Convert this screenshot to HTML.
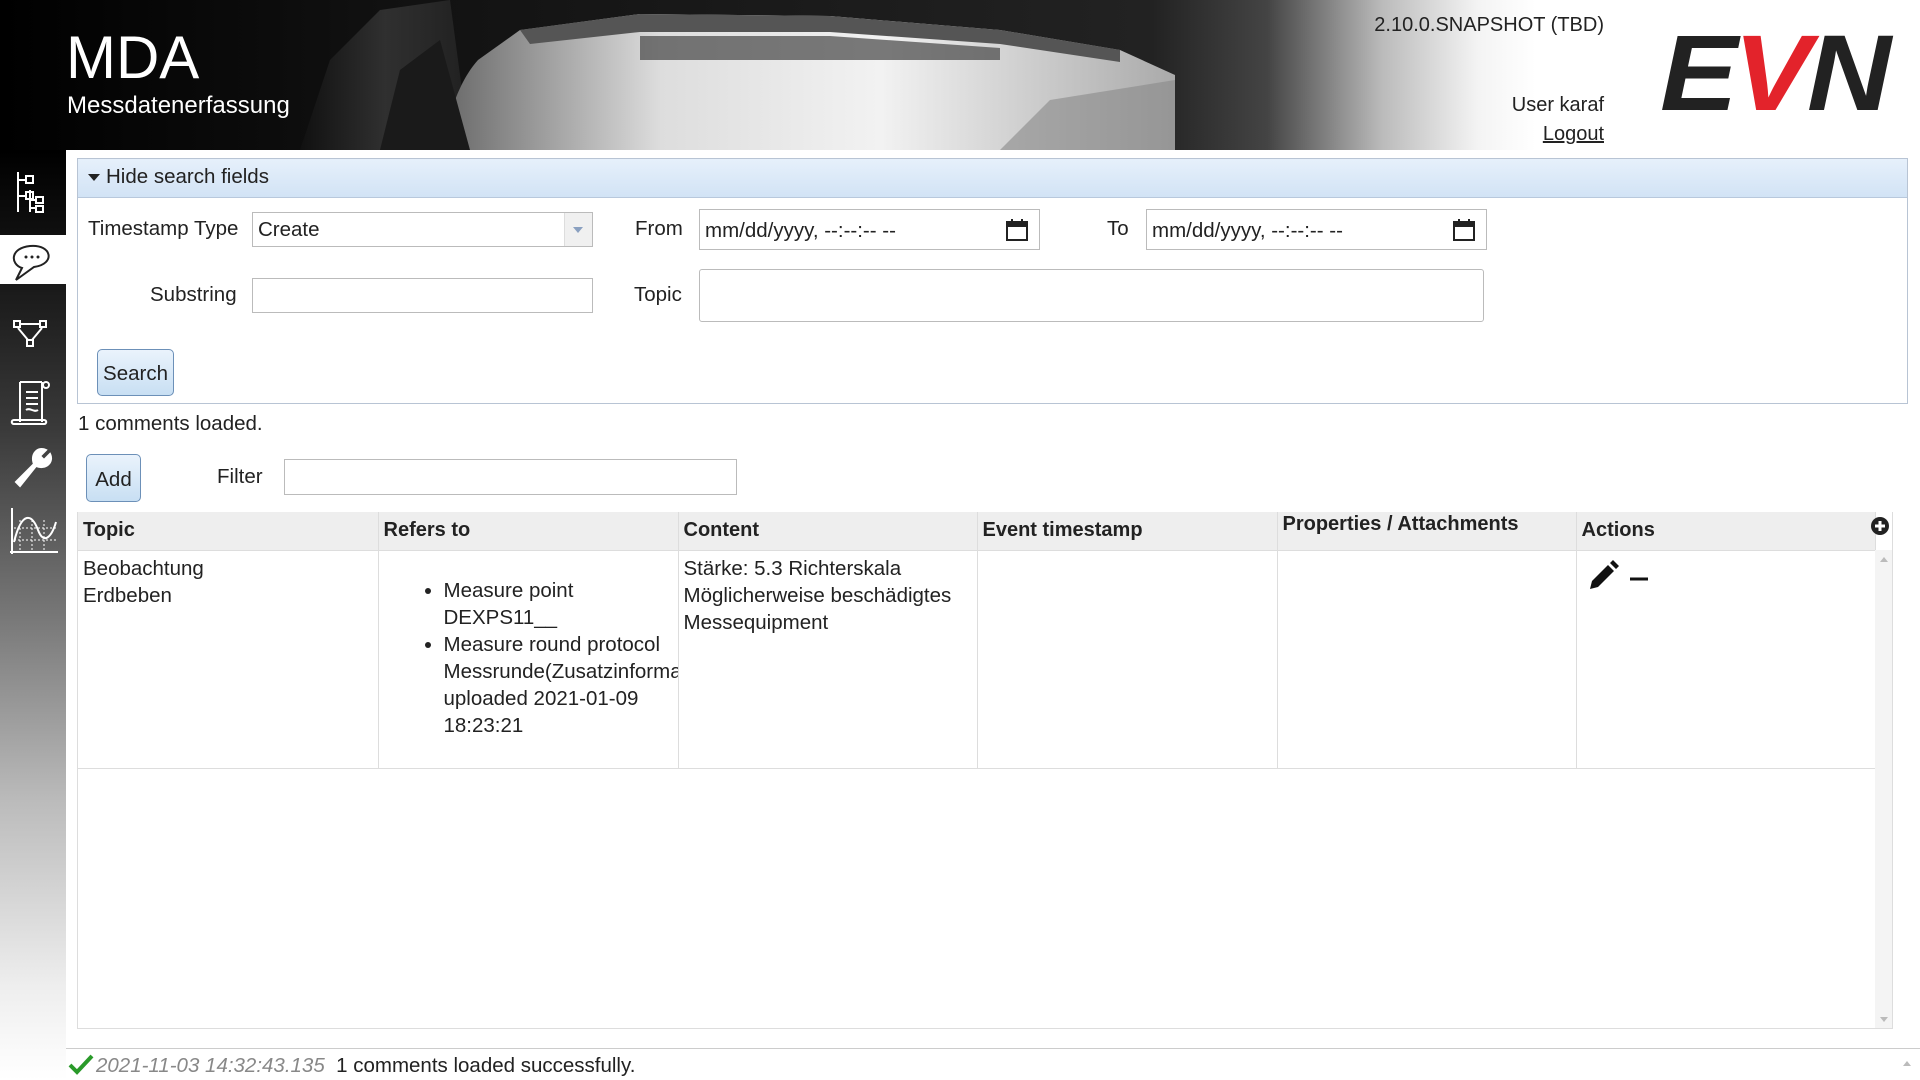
<!DOCTYPE html>
<html><head><meta charset="utf-8"><style>
*{box-sizing:border-box;margin:0;padding:0}
body{width:1920px;height:1080px;overflow:hidden;background:#fff;font-family:"Liberation Sans",sans-serif;font-size:20.5px;color:#222;position:relative}
.abs{position:absolute}
#hdr{left:0;top:0;width:1920px;height:150px;background:linear-gradient(90deg,#000 0,#111 20%,#1a1a1a 40%,#222 60%,#444 66%,#bbb 72%,#f4f4f4 77%,#fff 80%)}
#side{left:0;top:150px;width:66px;height:930px;background:linear-gradient(180deg,#000 0,#1a1a1a 15%,#3a3a3a 30%,#777 50%,#bbb 70%,#eee 90%,#fff 100%)}
input,.box{position:absolute;border:1px solid #bbb;background:#fff;font:inherit;padding-left:5px;color:#222}
.btn{position:absolute;border:1px solid #6c90b8;border-radius:5px;background:linear-gradient(#eaf3fc,#c8dff3);text-align:center}
table{border-collapse:collapse;table-layout:fixed}
th{background:#eee;text-align:left;font-weight:bold;font-size:20px;height:38px;padding:0 5px;border-right:1px solid #ddd;border-bottom:1px solid #ddd}
td{vertical-align:top;border-right:1px solid #ddd;border-bottom:1px solid #ddd;padding:4px 5px;line-height:27px;height:218px}
</style></head><body>
<div id="hdr" class="abs"></div>
<svg class="abs" style="left:0;top:0" width="1250" height="150">
<defs><linearGradient id="dg" x1="0" x2="1"><stop offset="0" stop-color="#666"/><stop offset=".3" stop-color="#ddd"/><stop offset=".6" stop-color="#f2f2f2"/><stop offset="1" stop-color="#aaa"/></linearGradient>
<linearGradient id="tg" x1="0" x2="1"><stop offset="0" stop-color="#111"/><stop offset=".5" stop-color="#333"/><stop offset="1" stop-color="#222"/></linearGradient></defs>
<path d="M300 150 L330 60 L380 10 L450 0 L470 150Z" fill="url(#tg)" opacity=".9"/>
<path d="M440 150 C450 110 460 80 478 60 L520 30 L640 14 L830 16 L1000 30 L1120 50 L1175 75 L1175 150Z" fill="url(#dg)"/>
<path d="M520 30 L640 14 L830 16 L1000 30 L1120 50 L1120 62 L1000 44 L830 32 L640 32 L530 44Z" fill="#555"/>
<path d="M640 36 L830 36 L1000 48 L1000 60 L640 60Z" fill="#444" opacity=".7"/>
<path d="M1050 100 L1175 80 L1175 150 L1000 150Z" fill="#888" opacity=".6"/>
<path d="M380 150 L400 70 L440 40 L470 150Z" fill="#1a1a1a"/>
</svg>
<div class="abs" style="left:66px;top:28px;color:#fff;font-size:60px;font-weight:300;line-height:60px">MDA</div>
<div class="abs" style="left:67px;top:92px;color:#fff;font-size:24px">Messdatenerfassung</div>
<div class="abs" style="right:316px;top:14px;font-size:20px">2.10.0.SNAPSHOT (TBD)</div>
<div class="abs" style="right:316px;top:94px;font-size:20px">User karaf</div>
<div class="abs" style="right:316px;top:123px;font-size:20px;text-decoration:underline">Logout</div>
<div class="abs" style="left:1660px;top:18px;font-weight:bold;font-style:italic;font-size:108px;letter-spacing:-4px;line-height:110px;transform:scaleX(1.08);transform-origin:left"><span style="color:#222">E</span><span style="color:#e3232b">V</span><span style="color:#222">N</span></div>

<div id="side" class="abs"></div>
<div class="abs" style="left:0;top:235px;width:66px;height:49px;background:#fff"></div>
<svg class="abs" style="left:0;top:150px" width="66" height="420" fill="none" stroke="#fff" stroke-width="2">
<path d="M18 22V62M18 30H26M18 46H26M30 40V62M30 50h6M30 58h6"/><rect x="26" y="26" width="7" height="7"/><rect x="26" y="42" width="7" height="7"/><rect x="36" y="47" width="7" height="6"/><rect x="36" y="56" width="7" height="6"/>
<path d="M16 130 L22 118 C10 114 10 98 30 96 C52 94 56 114 34 117 Z" stroke="#222"/><circle cx="26" cy="107" r="1.5" fill="#222" stroke="none"/><circle cx="32" cy="107" r="1.5" fill="#222" stroke="none"/><circle cx="38" cy="107" r="1.5" fill="#222" stroke="none"/>
<rect x="14" y="171" width="6" height="6"/><rect x="40" y="171" width="6" height="6"/><rect x="27" y="190" width="6" height="6"/><path d="M20 174H40M18 178L28 190M42 178L32 190"/>
<path d="M20 232V272M20 232h22M42 232v40M14 270h30c3 0 3 4 0 4H14c-3 0-3-4 0-4M26 242h12M26 248h12M26 254h12M26 260c4-3 8 3 12 0"/><circle cx="46" cy="235" r="3"/>
<path d="M16 332L34 314C30 304 38 296 46 300L40 306 44 310 50 304C54 312 46 320 36 316L20 336Z" fill="#fff"/>
<path d="M10 402H58M12 404V358M14 392C22 360 32 364 38 380S52 386 56 372" /><path d="M20 370V400M32 370V400M44 370V400M14 378H56M14 390H56" stroke-dasharray="2 2" stroke-width="1"/>
</svg>

<div class="abs" style="left:77px;top:158px;width:1831px;height:246px;border:1px solid #b8c4d4"></div>
<div class="abs" style="left:78px;top:159px;width:1829px;height:39px;background:linear-gradient(#e6f0fb,#d2e3f5);border-bottom:1px solid #b8c8dc;padding:6px 0 0 28px">Hide search fields</div>
<div class="abs" style="left:88px;top:174px;width:0;height:0;border-left:6px solid transparent;border-right:6px solid transparent;border-top:7px solid #222"></div>
<div class="abs" style="left:88px;top:217px">Timestamp Type</div>
<div class="box" style="left:252px;top:212px;width:341px;height:35px;padding-top:5px">Create</div>
<div class="abs" style="left:564px;top:213px;width:28px;height:33px;background:#f0f0f0;border-left:1px solid #ddd"></div>
<div class="abs" style="left:573px;top:227px;border-left:5px solid transparent;border-right:5px solid transparent;border-top:6px solid #8aa0c0"></div>
<div class="abs" style="left:635px;top:217px">From</div>
<div class="box" style="left:699px;top:209px;width:341px;height:41px;padding-top:9px">mm/dd/yyyy, --:--:-- --</div>
<div class="abs" style="left:1107px;top:217px">To</div>
<div class="box" style="left:1146px;top:209px;width:341px;height:41px;padding-top:9px">mm/dd/yyyy, --:--:-- --</div>
<svg class="abs" style="left:1005px;top:218px" width="24" height="24"><rect x="2" y="4" width="20" height="18" fill="none" stroke="#222" stroke-width="2"/><rect x="2" y="4" width="20" height="5" fill="#222"/><path d="M7 1v5M17 1v5" stroke="#222" stroke-width="2"/></svg>
<svg class="abs" style="left:1452px;top:218px" width="24" height="24"><rect x="2" y="4" width="20" height="18" fill="none" stroke="#222" stroke-width="2"/><rect x="2" y="4" width="20" height="5" fill="#222"/><path d="M7 1v5M17 1v5" stroke="#222" stroke-width="2"/></svg>
<div class="abs" style="left:150px;top:283px">Substring</div>
<div class="box" style="left:252px;top:278px;width:341px;height:35px"></div>
<div class="abs" style="left:634px;top:283px">Topic</div>
<div class="box" style="left:699px;top:269px;width:785px;height:53px;border-radius:3px"></div>
<div class="btn" style="left:97px;top:349px;width:77px;height:47px;padding-top:12px">Search</div>

<div class="abs" style="left:78px;top:412px">1 comments loaded.</div>
<div class="btn" style="left:86px;top:454px;width:55px;height:48px;padding-top:13px">Add</div>
<div class="abs" style="left:217px;top:465px">Filter</div>
<div class="box" style="left:284px;top:459px;width:453px;height:36px"></div>

<div class="abs" style="left:77px;top:512px;width:1816px;height:517px;border:1px solid #ddd;border-top:none"></div>
<table class="abs" style="left:78px;top:512px;width:1797px">
<colgroup><col style="width:300px"><col style="width:300px"><col style="width:299px"><col style="width:300px"><col style="width:299px"><col style="width:299px"></colgroup>
<tr><th>Topic</th><th>Refers to</th><th>Content</th><th>Event timestamp</th><th style="vertical-align:top;padding-top:1px">Properties / Attachments</th><th>Actions</th></tr>
<tr><td>Beobachtung<br>Erdbeben</td><td style="padding-top:26px;overflow:hidden;white-space:nowrap"><ul style="padding-left:60px"><li>Measure point<br>DEXPS11__</li><li>Measure round protocol<br>Messrunde(Zusatzinformation)<br>uploaded 2021-01-09<br>18:23:21</li></ul></td><td>Stärke: 5.3 Richterskala<br>Möglicherweise beschädigtes<br>Messequipment</td><td></td><td></td><td>
<svg width="80" height="40" style="margin:2px 0 0 4px"><path d="M4 32L6 24 22 8 28 14 12 30Z M24 6l3-3 6 6-3 3z" fill="#111"/><path d="M44 22H62" stroke="#111" stroke-width="3"/></svg></td></tr>
</table>
<svg class="abs" style="left:1870px;top:516px" width="20" height="20"><circle cx="10" cy="10" r="9" fill="#222"/><path d="M10 5v10M5 10h10" stroke="#fff" stroke-width="3"/></svg>
<div class="abs" style="left:1875px;top:550px;width:17px;height:478px;background:#f4f4f4"></div>
<div class="abs" style="left:1880px;top:557px;border-left:4px solid transparent;border-right:4px solid transparent;border-bottom:5px solid #bbb"></div>
<div class="abs" style="left:1880px;top:1017px;border-left:4px solid transparent;border-right:4px solid transparent;border-top:5px solid #bbb"></div>

<div class="abs" style="left:66px;top:1048px;width:1854px;height:1px;background:#ccc"></div>
<svg class="abs" style="left:68px;top:1053px" width="26" height="22"><path d="M2 12l7 7L24 3" fill="none" stroke="#2a9a2a" stroke-width="4"/></svg>
<div class="abs" style="left:96px;top:1054px"><span style="color:#888;font-style:italic">2021-11-03 14:32:43.135</span> &nbsp;1 comments loaded successfully.</div>
<div class="abs" style="left:1903px;top:1061px;border-left:4px solid transparent;border-right:4px solid transparent;border-bottom:5px solid #bbb"></div>
</body></html>
